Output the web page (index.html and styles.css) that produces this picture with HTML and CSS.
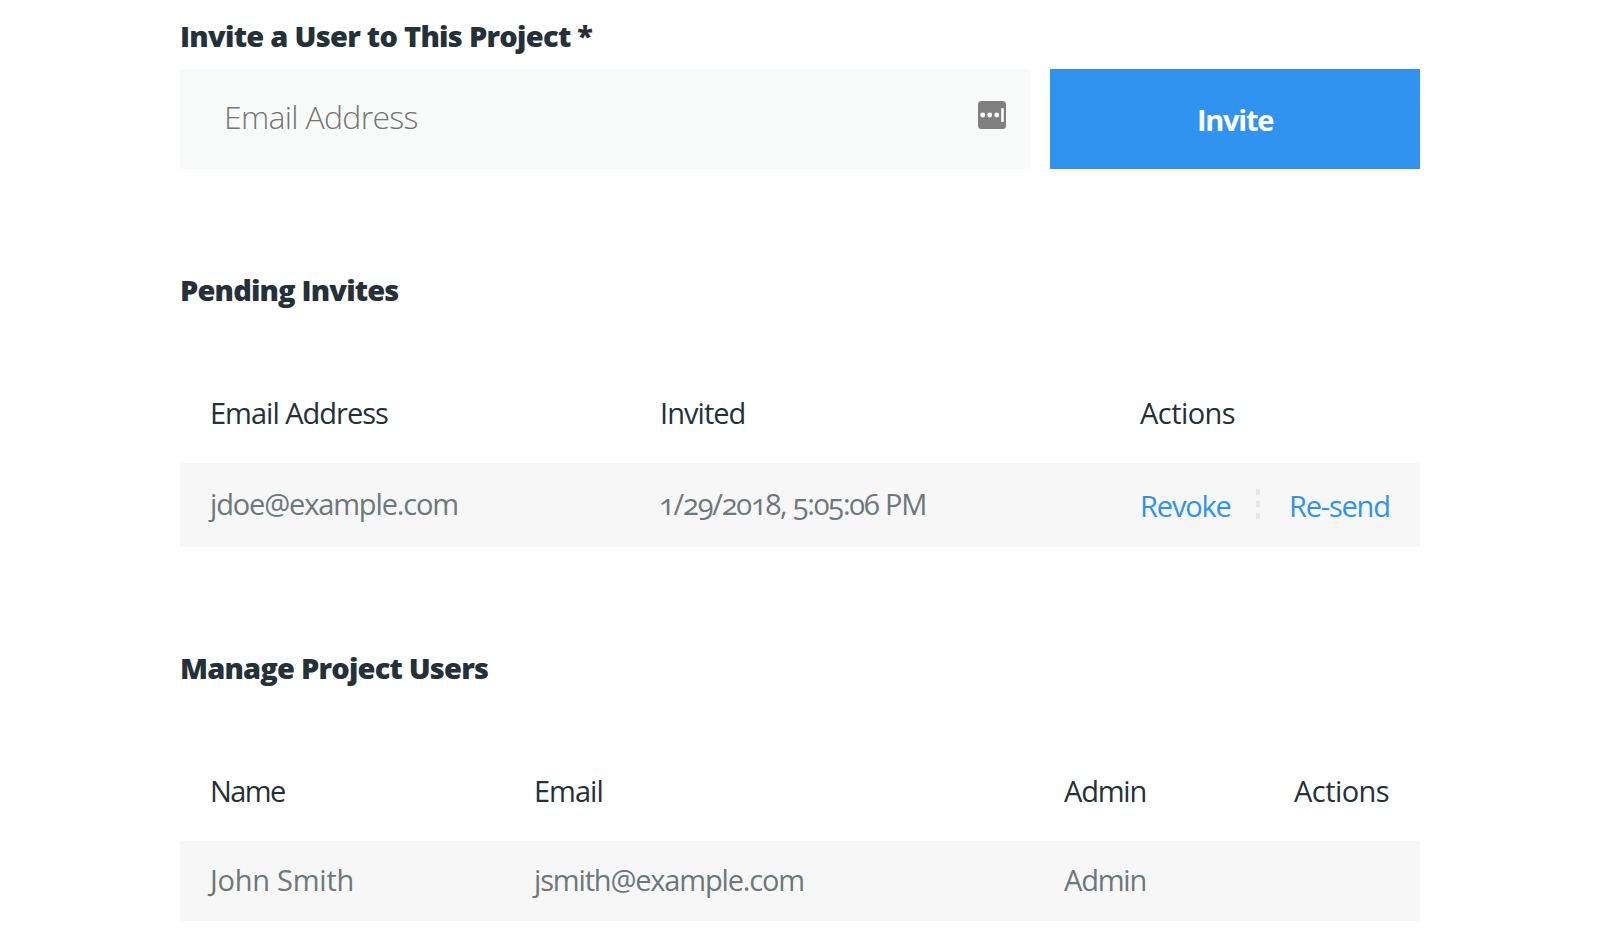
FILE: index.html
```
<!DOCTYPE html>
<html lang="en">
<head>
<meta charset="utf-8">
<title>Project Users</title>
<link rel="stylesheet" href="styles.css">
</head>
<body>
<main class="page">
  <form class="invite">
    <h2 class="title"><span class="t-invite">Invite a User to This Project *</span></h2>
    <div class="invite-row">
      <label class="field">
        <span class="placeholder">Email Address</span>
        <svg class="field-icon" width="28" height="28" viewBox="0 0 28 28">
          <rect width="28" height="28" rx="3.5" fill="#808080"/>
          <circle cx="4.7" cy="14" r="2.4" fill="#fff"/>
          <circle cx="11.7" cy="14" r="2.4" fill="#fff"/>
          <circle cx="18.7" cy="14" r="2.4" fill="#fff"/>
          <rect x="23.2" y="7" width="2.6" height="14" rx="1.1" fill="#fff"/>
        </svg>
      </label>
      <button class="button" type="button"><span class="button-text">Invite</span></button>
    </div>
  </form>

  <section class="section">
    <h2 class="title"><span class="t-pending">Pending Invites</span></h2>
    <div class="row head cols-pending">
      <span class="h-address">Email Address</span>
      <span class="h-invited">Invited</span>
      <span class="h-actions">Actions</span>
    </div>
    <div class="row body tall cols-pending">
      <span class="c-jdoe">jdoe@example.com</span>
      <span class="c-date">1/29/2018, 5:05:06 PM</span>
      <span class="actions">
        <a class="revoke">Revoke</a>
        <i class="divider"><b class="dot"></b><b class="dot"></b><b class="dot"></b></i>
        <a class="resend">Re-send</a>
      </span>
    </div>
  </section>

  <section class="section">
    <h2 class="title"><span class="t-manage">Manage Project Users</span></h2>
    <div class="row head cols-users">
      <span class="h-name">Name</span>
      <span class="h-email">Email</span>
      <span class="admin">Admin</span>
      <span class="h-actions">Actions</span>
    </div>
    <div class="row body cols-users">
      <span class="c-john">John Smith</span>
      <span class="c-jsmith">jsmith@example.com</span>
      <span class="admin">Admin</span>
    </div>
  </section>
</main>
</body>
</html>
```
FILE: styles.css
```
* { box-sizing: border-box; }
body {
  margin: 0;
  background: #fff;
  color: #253139;
  font-family: "Open Sans", "Noto Sans", sans-serif;
  font-size: 29px;
  line-height: 40px;
  font-variant-numeric: oldstyle-nums;
  white-space: nowrap;
}
.page { width: 1240px; margin: 0 auto; padding-top: 16px; height: 940px; overflow: hidden; }
.title { margin: 0; font-size: 29px; font-weight: 800; line-height: 40px; }
.t-invite { letter-spacing: -0.73px; }
.t-pending { letter-spacing: -0.85px; }
.t-manage { letter-spacing: -0.81px; }

.invite-row { display: flex; gap: 20px; margin-top: 13px; }
.field {
  display: flex; justify-content: space-between;
  width: 850px; height: 100px; padding: 32px 24px 0 44px;
  background: #f9fbfa;
}
.placeholder { font-size: 32px; font-weight: 340; line-height: 32px; letter-spacing: -0.7px; color: #757575; }
.field-icon { display: block; }
.button {
  width: 370px; height: 100px; padding: 2px 0 0; border: 0;
  background: #3093f0; color: #fff;
  font: 700 29px/40px "Open Sans", "Noto Sans", sans-serif;
}
.button-text { letter-spacing: -1.25px; }

.section { padding-top: 101px; }
.row { display: grid; align-items: center; padding-left: 30px; }
.head { height: 80px; margin-top: 73px; padding-bottom: 21px; }
.body { height: 80px; padding-bottom: 2px; background: #f7f7f7; color: #6e787c; }
.tall { height: 84px; }
.cols-pending { grid-template-columns: 450px 480px 1fr; }
.cols-users { grid-template-columns: 324px 530px 230px 1fr; }

.h-address { letter-spacing: -1px; }
.h-invited { letter-spacing: -0.95px; }
.h-actions { letter-spacing: -0.55px; }
.h-name { letter-spacing: -1.6px; }
.h-email { letter-spacing: -1px; }
.admin { letter-spacing: -1.2px; }
.c-jdoe { letter-spacing: -1.15px; }
.c-date { letter-spacing: -1.2px; margin-left: -1px; }
.c-john { letter-spacing: -0.25px; }
.c-jsmith { letter-spacing: -1.17px; }

.actions { display: grid; grid-template-columns: 116px 34px 1fr; align-items: center; color: #3093f0; }
.revoke { letter-spacing: -1.15px; padding-top: 4px; }
.resend { letter-spacing: -1.2px; margin-left: -1px; padding-top: 4px; }
.divider { display: grid; gap: 6px; width: 4px; }
.dot { display: block; height: 6px; background: #e4e6e7; }
```
